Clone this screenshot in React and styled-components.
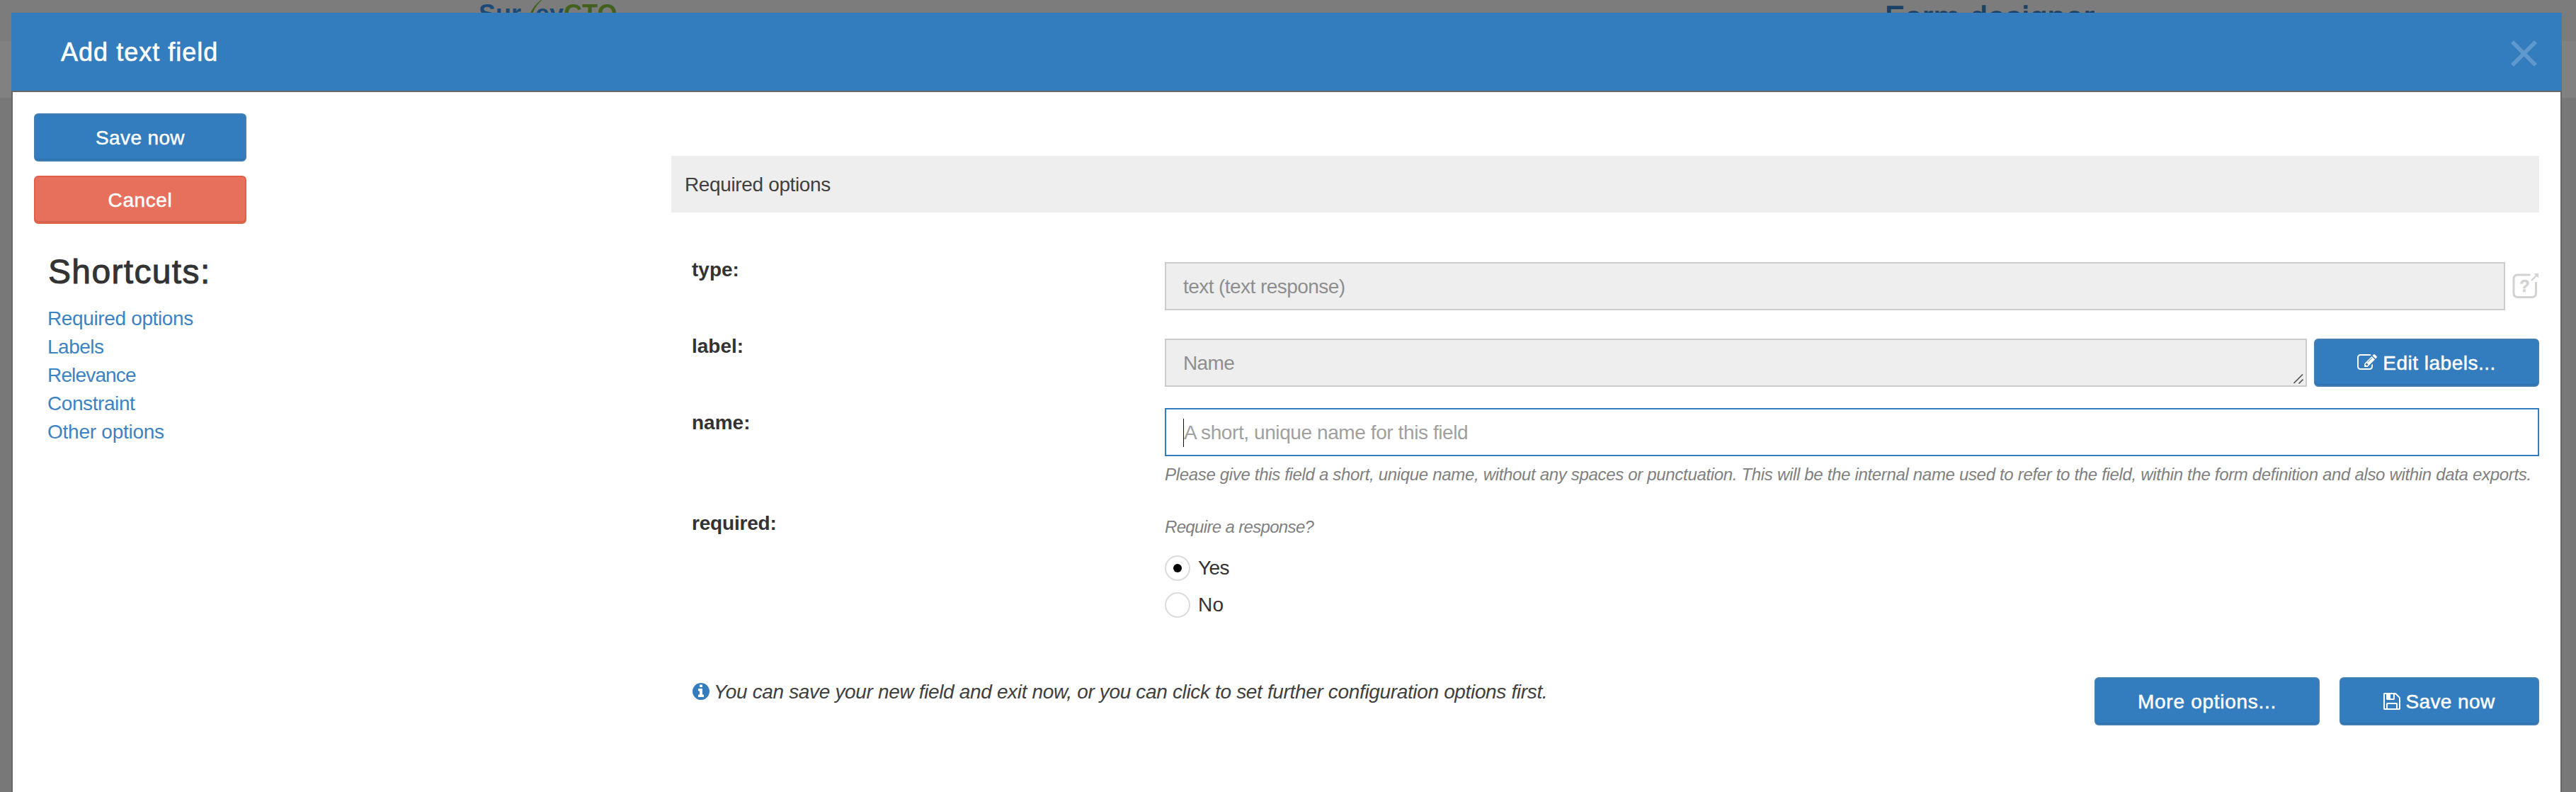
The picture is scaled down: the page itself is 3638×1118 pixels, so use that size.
import React from "react";
import styled, { createGlobalStyle, css } from "styled-components";

const blue = "#337dbf";
const ink = "#333";
const softInk = "#404040";

const GlobalStyle = createGlobalStyle`
  * { box-sizing: border-box; }
  body {
    margin: 0;
    overflow: hidden;
    font-family: "Liberation Sans", Arial, sans-serif;
    font-size: 28px;
    line-height: 40px;
    color: ${ink};
    background: #787878;
  }
`;

const tracked = css`
  letter-spacing: ${(p) => p.$track || 0}px;
  white-space: nowrap;
`;

/* Dimmed page behind the dialog */
const Backdrop = styled.div`
  height: 1118px;
  display: flex;
  flex-direction: column;
  background: #787878;
`;

const TopBar = styled.div`
  height: 58px;
  flex: none;
  display: flex;
  align-items: flex-start;
  padding-left: 676px;
  background: #7c7c7c;
`;

const SubBar = styled.div`
  height: 80px;
  flex: none;
  background: #818181;
`;

const Logo = styled.div`
  display: flex;
  width: 1986px;
  font-size: 36px;
  font-weight: 700;
  line-height: 40px;
  color: #1b4a78;
  svg { width: 20px; height: 36px; overflow: visible; }
`;

const LogoGreen = styled.span`
  color: #42611f;
`;

const PageTitle = styled.h1`
  margin: 0;
  padding-top: 3px;
  font-size: 44px;
  font-weight: 400;
  line-height: 44px;
  color: #1b4266;
  -webkit-text-stroke: 1.4px #1b4266;
  ${tracked}
`;

/* Dialog */
const Dialog = styled.section`
  position: fixed;
  top: 18px;
  left: 16px;
  right: 20px;
  bottom: 0;
  display: flex;
  flex-direction: column;
`;

const DialogHeader = styled.header`
  height: 110px;
  flex: none;
  display: flex;
  align-items: center;
  justify-content: space-between;
  padding: 0 35px 0 70px;
  background: ${blue};
`;

const DialogTitle = styled.h2`
  margin: 0;
  padding-top: 2px;
  font-size: 36px;
  font-weight: 400;
  line-height: 44px;
  color: #fff;
  -webkit-text-stroke: 0.6px #fff;
  ${tracked}
`;

const CloseButton = styled.button`
  display: flex;
  margin: 5px 0 0;
  padding: 0;
  border: 0;
  background: none;
  color: #5f98cd;
`;

const DialogBody = styled.div`
  flex: 1;
  display: grid;
  grid-template-columns: 300px 1fr;
  column-gap: 600px;
  padding: 30px 30px 0;
  border: solid #676767;
  border-width: 2px 2px 0;
  background: #fff;
`;

const Sidebar = styled.aside`
  display: flex;
  flex-direction: column;
`;

const SidebarActions = styled.div`
  display: flex;
  flex-direction: column;
  gap: 20px;
`;

const Button = styled.button`
  width: ${(p) => p.$width}px;
  height: 68px;
  flex: none;
  display: flex;
  align-items: center;
  justify-content: center;
  gap: ${(p) => p.$gap || 0}px;
  margin: 0;
  padding: 2px 0 0;
  border: 2px solid ${(p) => (p.$danger ? "#e25f48" : "#437fb2")};
  border-radius: 6px;
  background: ${(p) => (p.$danger ? "#e6705c" : blue)};
  box-shadow: inset 0 -2px 0 ${(p) => (p.$danger ? "#d1654f" : "#2f72b0")};
  color: #fff;
  font: inherit;
  -webkit-text-stroke: 0.5px #fff;
  ${tracked}
  svg { margin-top: -2px; -webkit-text-stroke: 0; }
`;

const ShortcutsTitle = styled.h3`
  margin: 42px 0 20px 20px;
  font-size: 48px;
  font-weight: 400;
  line-height: 52px;
  -webkit-text-stroke: 1px ${ink};
  ${tracked}
`;

const ShortcutList = styled.nav`
  display: flex;
  flex-direction: column;
  align-items: flex-start;
  padding-left: 19px;
`;

const Shortcut = styled.a`
  color: #3b83c3;
  ${tracked}
`;

const Main = styled.main`
  padding-top: 60px;
`;

const SectionTitle = styled.div`
  height: 80px;
  display: flex;
  align-items: center;
  padding: 2px 0 0 19px;
  background: #eee;
  color: ${softInk};
  ${tracked}
`;

const Form = styled.div`
  margin-top: 60px;
  display: grid;
  grid-template-rows: 108px 108px 142px 238px;
`;

const FormRow = styled.div`
  display: grid;
  grid-template-columns: 668px 1fr;
  padding-left: 29px;
`;

const Label = styled.label`
  padding-top: 1px;
  font-weight: 700;
  ${tracked}
`;

const Control = styled.div`
  padding-top: ${(p) => p.$top || 0}px;
`;

const ControlLine = styled.div`
  display: flex;
  align-items: center;
  gap: 10px;
`;

const Field = styled.div`
  height: 68px;
  flex: 1;
  display: flex;
  align-items: center;
  justify-content: space-between;
  padding: 2px 3px 0 24px;
  border: 2px solid ${(p) => (p.$focus ? blue : "#ccc")};
  background: ${(p) => (p.$focus ? "#fff" : "#eee")};
  color: ${(p) => (p.$focus ? "#a0a0a0" : "#8e8e8e")};
  ${tracked}
`;

const Placeholder = styled.span`
  height: 40px;
  margin-right: auto;
  border-left: 1px solid #111;
`;

const ResizeHandle = styled.svg`
  width: 14px;
  height: 14px;
  align-self: flex-end;
  margin-bottom: 2px;
`;

const Hint = styled.p`
  margin: ${(p) => p.$top}px 0 0;
  font-size: 24px;
  font-style: italic;
  line-height: 34px;
  color: #808080;
  ${tracked}
`;

const RadioGroup = styled.div`
  display: flex;
  flex-direction: column;
  gap: 16px;
  margin-top: 23px;
`;

const RadioOption = styled.label`
  height: 36px;
  display: flex;
  align-items: center;
  gap: 11px;
  line-height: 42px;
  ${tracked}
`;

const RadioMark = styled.span`
  width: 36px;
  height: 36px;
  display: grid;
  place-items: center;
  border: 2px solid #dcdcdc;
  border-radius: 50%;
  &::after {
    content: "";
    width: 12px;
    height: 12px;
    border-radius: 50%;
    background: ${(p) => (p.$checked ? "#000" : "transparent")};
  }
`;

const Footer = styled.footer`
  display: flex;
  align-items: flex-start;
  justify-content: space-between;
  padding-left: 30px;
`;

const Note = styled.p`
  margin: 0;
  padding-top: 1px;
  display: flex;
  align-items: center;
  gap: 6px;
  font-style: italic;
  color: ${softInk};
  ${tracked}
  svg { margin-top: -2px; color: ${blue}; }
`;

const Actions = styled.div`
  display: flex;
  gap: 28px;
`;

const InfoIcon = () => (
  <svg width="24" height="24" viewBox="128 128 1536 1536" fill="currentColor">
    <path d="M1152 1376v-160q0-14-9-23t-23-9h-96v-512q0-14-9-23t-23-9h-320q-14 0-23 9t-9 23v160q0 14 9 23t23 9h96v320h-96q-14 0-23 9t-9 23v160q0 14 9 23t23 9h448q14 0 23-9t9-23zm-128-896v-160q0-14-9-23t-23-9h-192q-14 0-23 9t-9 23v160q0 14 9 23t23 9h192q14 0 23-9t9-23zm640 416q0 209-103 385.5t-279.5 279.5-385.5 103-385.5-103-279.5-279.5-103-385.5 103-385.5 279.5-279.5 385.5-103 385.5 103 279.5 279.5 103 385.5z" />
  </svg>
);

const SaveIcon = () => (
  <svg width="24" height="24" viewBox="128 128 1536 1536" fill="currentColor">
    <path d="M512 1536h768v-384h-768v384zm896 0h128v-896q0-14-10-38.5t-20-34.5l-281-281q-10-10-34-20t-39-10v416q0 40-28 68t-68 28h-576q-40 0-68-28t-28-68v-416h-128v1280h128v-416q0-40 28-68t68-28h832q40 0 68 28t28 68v416zm-384-928v-320q0-13-9.5-22.5t-22.5-9.5h-192q-13 0-22.5 9.5t-9.5 22.5v320q0 13 9.5 22.5t22.5 9.5h192q13 0 22.5-9.5t9.5-22.5zm640 32v928q0 40-28 68t-68 28h-1344q-40 0-68-28t-28-68v-1344q0-40 28-68t68-28h928q40 0 88 20t76 48l280 280q28 28 48 76t20 88z" />
  </svg>
);

const EditIcon = () => (
  <svg width="28" height="24" viewBox="0 128 1792 1536" fill="currentColor">
    <path d="M888 1184l116-116-152-152-116 116v56h96v96h56zm440-720q-16-16-33 1l-350 350q-17 17-1 33t33-1l350-350q17-17 1-33zm80 594v190q0 119-84.5 203.5t-203.5 84.5h-832q-119 0-203.5-84.5t-84.5-203.5v-832q0-119 84.5-203.5t203.5-84.5h832q63 0 117 25 15 7 18 23 3 17-9 29l-49 49q-14 14-32 8-23-6-45-6h-832q-66 0-113 47t-47 113v832q0 66 47 113t113 47h832q66 0 113-47t47-113v-126q0-13 9-22l64-64q15-15 35-7t20 29zm-96-738l288 288-672 672h-288v-288zm444 132l-92 92-288-288 92-92q28-28 68-28t68 28l152 152q28 28 28 68t-28 68z" />
  </svg>
);

const CloseIcon = () => (
  <svg width="37" height="37" viewBox="0 0 37 37" stroke="currentColor" strokeWidth="5.6">
    <path d="M2 2L35 35M35 2L2 35" />
  </svg>
);

const HelpIcon = () => (
  <svg width="38" height="36" viewBox="0 0 38 36" fill="none" stroke="#d2d2d2" strokeWidth="3">
    <path d="M25.5 2H8Q2 2 2 8V27.500Q2 33.500 8 33.500H27.500Q33.500 33.500 33.500 27.500V12" />
    <path d="M27 10L35 2" strokeWidth="2.4" />
    <path d="M30.500 0H37V6.500Z" fill="#d2d2d2" stroke="none" />
    <text x="10.300" y="26" fontSize="23.500" fontWeight="700" fill="#d2d2d2" stroke="#d2d2d2" strokeWidth="0.5">?</text>
  </svg>
);

const shortcuts = [
  ["Required options", -0.36],
  ["Labels", -0.48],
  ["Relevance", -0.84],
  ["Constraint", -0.42],
  ["Other options", -0.25],
];

export default function App() {
  return (
    <>
      <GlobalStyle />
      <Backdrop>
        <TopBar>
          <Logo>
            Sur
            <svg viewBox="0 0 20 36">
              <path d="M29.500 -1Q17 7 11.500 22L15 22Q19 9 30.500 -1Z" fill="#42611f" />
            </svg>
            ey<LogoGreen>CTO</LogoGreen>
          </Logo>
          <PageTitle $track={1}>Form designer</PageTitle>
        </TopBar>
        <SubBar />
      </Backdrop>

      <Dialog>
        <DialogHeader>
          <DialogTitle $track={1.02}>Add text field</DialogTitle>
          <CloseButton aria-label="Close"><CloseIcon /></CloseButton>
        </DialogHeader>
        <DialogBody>
          <Sidebar>
            <SidebarActions>
              <Button $width={300} $track={0.37}>Save now</Button>
              <Button $width={300} $track={0.6} $danger>Cancel</Button>
            </SidebarActions>
            <ShortcutsTitle $track={1.35}>Shortcuts:</ShortcutsTitle>
            <ShortcutList>
              {shortcuts.map(([name, track]) => (
                <Shortcut key={name} $track={track}>{name}</Shortcut>
              ))}
            </ShortcutList>
          </Sidebar>

          <Main>
            <SectionTitle $track={-0.36}>Required options</SectionTitle>
            <Form>
              <FormRow>
                <Label>type:</Label>
                <Control $top={10}>
                  <ControlLine>
                    <Field $track={-0.56}>text (text response)</Field>
                    <HelpIcon />
                  </ControlLine>
                </Control>
              </FormRow>
              <FormRow>
                <Label>label:</Label>
                <Control $top={10}>
                  <ControlLine>
                    <Field $track={-0.6}>
                      Name
                      <ResizeHandle viewBox="0 0 14 14" stroke="#555" strokeWidth="1.7">
                        <path d="M0.500 13L13 0.500M7.500 13.500L13.500 7.500" />
                      </ResizeHandle>
                    </Field>
                    <Button $width={318} $gap={8} $track={0.5}><EditIcon />Edit labels...</Button>
                  </ControlLine>
                </Control>
              </FormRow>
              <FormRow>
                <Label>name:</Label>
                <Control>
                  <Field $focus $track={-0.41}>
                    <Placeholder>A short, unique name for this field</Placeholder>
                  </Field>
                  <Hint $top={9} $track={-0.325}>
                    Please give this field a short, unique name, without any spaces or punctuation. This will be the internal name used to refer to the field, within the form definition and also within data exports.
                  </Hint>
                </Control>
              </FormRow>
              <FormRow>
                <Label $track={-0.2}>required:</Label>
                <Control>
                  <Hint $top={9} $track={-0.66}>Require a response?</Hint>
                  <RadioGroup>
                    <RadioOption $track={-0.6}><RadioMark $checked />Yes</RadioOption>
                    <RadioOption $track={0.3}><RadioMark />No</RadioOption>
                  </RadioGroup>
                </Control>
              </FormRow>
            </Form>
            <Footer>
              <Note $track={-0.345}>
                <InfoIcon />
                You can save your new field and exit now, or you can click to set further configuration options first.
              </Note>
              <Actions>
                <Button $width={318} $track={0.72}>More options...</Button>
                <Button $width={282} $gap={7} $track={0.4}><SaveIcon />Save now</Button>
              </Actions>
            </Footer>
          </Main>
        </DialogBody>
      </Dialog>
    </>
  );
}
